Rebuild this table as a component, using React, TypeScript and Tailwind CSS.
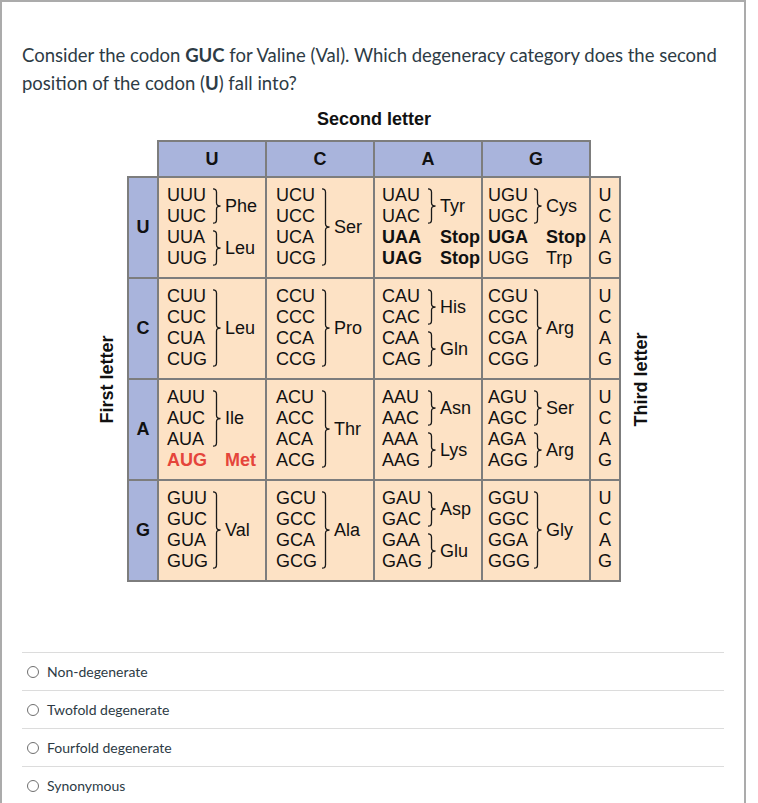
import React from 'react';

type Group = {
  codons: string[];
  label: string;
  brace?: boolean;
  bold?: boolean;
  red?: boolean;
};

type Row = { first: string; cells: Group[][] };

const ROWS: Row[] = [
  {
    first: 'U',
    cells: [
      [
        { codons: ['UUU', 'UUC'], label: 'Phe', brace: true },
        { codons: ['UUA', 'UUG'], label: 'Leu', brace: true },
      ],
      [{ codons: ['UCU', 'UCC', 'UCA', 'UCG'], label: 'Ser', brace: true }],
      [
        { codons: ['UAU', 'UAC'], label: 'Tyr', brace: true },
        { codons: ['UAA'], label: 'Stop', bold: true },
        { codons: ['UAG'], label: 'Stop', bold: true },
      ],
      [
        { codons: ['UGU', 'UGC'], label: 'Cys', brace: true },
        { codons: ['UGA'], label: 'Stop', bold: true },
        { codons: ['UGG'], label: 'Trp' },
      ],
    ],
  },
  {
    first: 'C',
    cells: [
      [{ codons: ['CUU', 'CUC', 'CUA', 'CUG'], label: 'Leu', brace: true }],
      [{ codons: ['CCU', 'CCC', 'CCA', 'CCG'], label: 'Pro', brace: true }],
      [
        { codons: ['CAU', 'CAC'], label: 'His', brace: true },
        { codons: ['CAA', 'CAG'], label: 'Gln', brace: true },
      ],
      [{ codons: ['CGU', 'CGC', 'CGA', 'CGG'], label: 'Arg', brace: true }],
    ],
  },
  {
    first: 'A',
    cells: [
      [
        { codons: ['AUU', 'AUC', 'AUA'], label: 'Ile', brace: true },
        { codons: ['AUG'], label: 'Met', bold: true, red: true },
      ],
      [{ codons: ['ACU', 'ACC', 'ACA', 'ACG'], label: 'Thr', brace: true }],
      [
        { codons: ['AAU', 'AAC'], label: 'Asn', brace: true },
        { codons: ['AAA', 'AAG'], label: 'Lys', brace: true },
      ],
      [
        { codons: ['AGU', 'AGC'], label: 'Ser', brace: true },
        { codons: ['AGA', 'AGG'], label: 'Arg', brace: true },
      ],
    ],
  },
  {
    first: 'G',
    cells: [
      [{ codons: ['GUU', 'GUC', 'GUA', 'GUG'], label: 'Val', brace: true }],
      [{ codons: ['GCU', 'GCC', 'GCA', 'GCG'], label: 'Ala', brace: true }],
      [
        { codons: ['GAU', 'GAC'], label: 'Asp', brace: true },
        { codons: ['GAA', 'GAG'], label: 'Glu', brace: true },
      ],
      [{ codons: ['GGU', 'GGC', 'GGA', 'GGG'], label: 'Gly', brace: true }],
    ],
  },
];

// left padding differs a little per column in the source figure
const COL_PAD = ['pl-[8px]', 'pl-[9px]', 'pl-[7px]', 'pl-[5px]'];

const OPTIONS = ['Non-degenerate', 'Twofold degenerate', 'Fourfold degenerate', 'Synonymous'];

const Brace = ({ rows }: { rows: number }) => {
  const h = rows * 21 - 6;
  const m = h / 2;
  return (
    <svg width={9} height={h} viewBox={`0 0 9 ${h}`} className="ml-[5px] mr-[4px] shrink-0">
      <path
        d={`M1 0.8 Q4.5 0.8 4.5 4 L4.5 ${m - 3} Q4.5 ${m} 8.5 ${m} Q4.5 ${m} 4.5 ${m + 3} L4.5 ${h - 4} Q4.5 ${h - 0.8} 1 ${h - 0.8}`}
        fill="none"
        stroke="#1a1a1a"
        strokeWidth={1.3}
      />
    </svg>
  );
};

const CodonGroup = ({ group }: { group: Group }) => {
  const tone = group.red ? 'text-[#e5453b] font-bold' : group.bold ? 'font-bold' : '';
  return (
    <div className={`flex items-center ${tone}`}>
      <div className="w-[40px] shrink-0">
        {group.codons.map((c) => (
          <div key={c} className="h-[21px] leading-[21px]">
            {c}
          </div>
        ))}
      </div>
      {group.brace ? <Brace rows={group.codons.length} /> : <div className="w-[18px] shrink-0" />}
      <div className="whitespace-nowrap leading-[21px]">{group.label}</div>
    </div>
  );
};

const CodonTable = () => {
  return (
    <div className="font-['Liberation_Sans',Arial,sans-serif] text-[18px] text-[#111]">
      {/* SECOND LETTER HEADER */}
      <div className="ml-[135px] w-[434px]">
        <p className="text-center font-bold leading-[20px]">Second letter</p>
        <div className="mt-[11px] flex gap-[2px] bg-[#7d7d7d] px-[2px] pt-[2px]">
          {['U', 'C', 'A', 'G'].map((l) => (
            <div key={l} className="flex h-[34px] w-[106px] items-center justify-center bg-[#a9b4dc] font-bold">
              {l}
            </div>
          ))}
        </div>
      </div>

      {/* BODY */}
      <div className="flex items-stretch">
        <div className="ml-[75px] mr-[10px] flex w-[20px] items-center justify-center">
          <span className="-rotate-90 whitespace-nowrap font-bold">First letter</span>
        </div>

        <div className="grid grid-cols-[28px_repeat(4,106px)_28px] gap-[2px] bg-[#7d7d7d] p-[2px]">
          {ROWS.map((row) => (
            <React.Fragment key={row.first}>
              <div className="flex h-[99px] items-center justify-center bg-[#a9b4dc] font-bold">
                {row.first}
              </div>
              {row.cells.map((cell, ci) => (
                <div key={ci} className={`h-[99px] bg-[#fde2c5] pt-[7px] ${COL_PAD[ci]}`}>
                  {cell.map((g) => (
                    <CodonGroup key={g.codons[0]} group={g} />
                  ))}
                </div>
              ))}
              <div className="flex h-[99px] flex-col items-center bg-[#fde2c5] pt-[7px]">
                {['U', 'C', 'A', 'G'].map((l) => (
                  <div key={l} className="h-[21px] leading-[21px]">
                    {l}
                  </div>
                ))}
              </div>
            </React.Fragment>
          ))}
        </div>

        <div className="ml-[10px] flex w-[20px] items-center justify-center">
          <span className="-rotate-90 whitespace-nowrap font-bold">Third letter</span>
        </div>
      </div>
    </div>
  );
};

const App = () => {
  return (
    <div className="min-h-screen bg-white">
      <div className="w-[746px] border-l-2 border-r-2 border-t-2 border-[#ababab] px-[20px] pt-[39px] font-['Lato',sans-serif] text-[#2d3b45]">
        {/* QUESTION */}
        <p className="text-[18.5px] leading-[28px]">
          Consider the codon <b>GUC</b> for Valine (Val). Which degeneracy category does the second position of the
          codon (<b>U</b>) fall into?
        </p>

        <div className="mt-[12px]">
          <CodonTable />
        </div>

        {/* ANSWERS */}
        <div className="mt-[70px]">
          {OPTIONS.map((o) => (
            <label key={o} className="flex h-[38px] items-center border-t border-[#dcdcdc] text-[14px]">
              <span className="ml-[5px] mr-[8px] size-[12px] rounded-full border border-[#6f6f6f] bg-white" />
              {o}
            </label>
          ))}
        </div>
      </div>
    </div>
  );
};

export default App;
